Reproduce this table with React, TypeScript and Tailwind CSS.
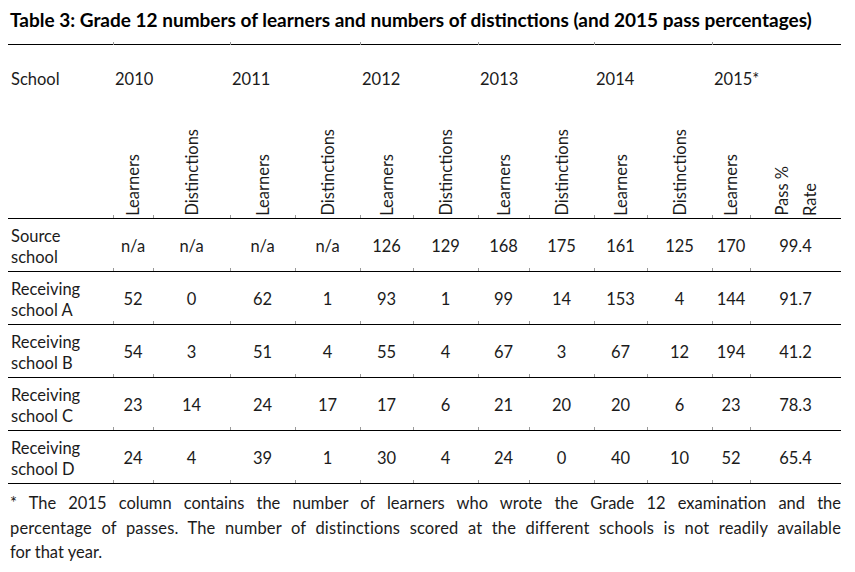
const cols =
  "grid grid-cols-[105px_40px_77px_65px_65px_53px_65px_51px_65px_53px_65px_38px_91px]";

const tick =
  "relative before:absolute before:left-0 before:bottom-0 before:h-[3px] before:w-px before:bg-[#9a9a9a]";
const tickUp =
  "relative before:absolute before:left-0 before:-top-[3px] before:h-[3px] before:w-px before:bg-[#9a9a9a]";

const years = ["2010", "2011", "2012", "2013", "2014", "2015*"];

const subHeads = [
  "Learners",
  "Distinctions",
  "Learners",
  "Distinctions",
  "Learners",
  "Distinctions",
  "Learners",
  "Distinctions",
  "Learners",
  "Distinctions",
  "Learners",
];

const rows = [
  { school: ["Source", "school"], values: ["n/a", "n/a", "n/a", "n/a", "126", "129", "168", "175", "161", "125", "170", "99.4"] },
  { school: ["Receiving", "school A"], values: ["52", "0", "62", "1", "93", "1", "99", "14", "153", "4", "144", "91.7"] },
  { school: ["Receiving", "school B"], values: ["54", "3", "51", "4", "55", "4", "67", "3", "67", "12", "194", "41.2"] },
  { school: ["Receiving", "school C"], values: ["23", "14", "24", "17", "17", "6", "21", "20", "20", "6", "23", "78.3"] },
  { school: ["Receiving", "school D"], values: ["24", "4", "39", "1", "30", "4", "24", "0", "40", "10", "52", "65.4"] },
];

const App = () => {
  return (
    <div className="w-[855px] h-[572px] bg-white text-[#1b1b1b] font-['Lato','Open_Sans',sans-serif] text-[16.5px] overflow-hidden">
      <div className="pl-2 pr-[14px]">
        <h1 className="pt-[7px] pl-[2px] h-[44px] text-[19px] leading-[26px] font-bold text-black whitespace-nowrap">
          Table 3: Grade 12 numbers of learners and numbers of distinctions (and 2015 pass percentages)
        </h1>

        {/* year row */}
        <div className={`${cols} h-[69px] border-t border-black items-center`}>
          <div className="pl-[3px]">School</div>
          {years.map((y) => (
            <div key={y} className={`col-span-2 ${tickUp} h-full flex items-center pl-[2px]`}>
              {y}
            </div>
          ))}
        </div>

        {/* rotated sub-headers */}
        <div className={`${cols} h-[106px] border-b border-black`}>
          <div></div>
          {subHeads.map((s, i) => (
            <div key={i} className={`${tick} flex items-end justify-center pb-[2px]`}>
              <span className="[writing-mode:vertical-rl] rotate-180 leading-[18px]">{s}</span>
            </div>
          ))}
          <div className={`${tick} flex items-end justify-center gap-[10px] pb-[2px]`}>
            <span className="[writing-mode:vertical-rl] rotate-180 leading-[18px]">Pass %</span>
            <span className="[writing-mode:vertical-rl] rotate-180 leading-[18px]">Rate</span>
          </div>
        </div>

        {rows.map((r) => (
          <div key={r.school[1]} className={`${cols} h-[53px] border-b border-black items-center`}>
            <div className="pl-[3px] pt-[3px] leading-[21px]">
              <div>{r.school[0]}</div>
              <div>{r.school[1]}</div>
            </div>
            {r.values.map((v, i) => (
              <div key={i} className={`${tick} h-full pt-[3px] flex items-center justify-center`}>
                {v}
              </div>
            ))}
          </div>
        ))}

        <div className="pt-[7px] pl-[2px] leading-[24.5px]">
          <div className="text-justify [text-align-last:justify] whitespace-nowrap">
            * The 2015 column contains the number of learners who wrote the Grade 12 examination and the
          </div>
          <div className="text-justify [text-align-last:justify] whitespace-nowrap tracking-[0.15px]">
            percentage of passes. The number of distinctions scored at the different schools is not readily available
          </div>
          <div>for that year.</div>
        </div>
      </div>
    </div>
  );
};

export default App;
